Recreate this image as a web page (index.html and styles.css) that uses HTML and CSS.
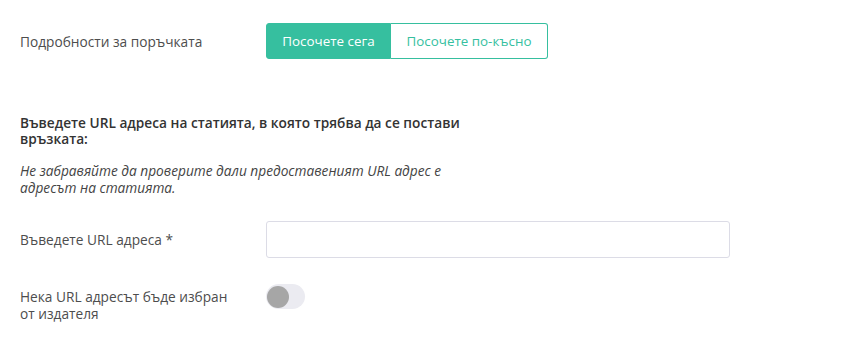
FILE: index.html
```html
<!DOCTYPE html>
<html lang="bg">
<head>
<meta charset="utf-8">
<link rel="stylesheet" href="styles.css">
</head>
<body>
<div class="page">
  <div class="row row-top">
    <div class="label">Подробности за поръчката</div>
    <div class="btn-group">
      <button class="btn btn-active">Посочете сега</button>
      <button class="btn btn-later">Посочете по-късно</button>
    </div>
  </div>

  <div class="info">
    <p class="heading">Въведете URL адреса на статията, в която трябва да се постави връзката:</p>
    <p class="note">Не забравяйте да проверите дали предоставеният URL адрес е адресът на статията.</p>
  </div>

  <div class="row row-input">
    <div class="label">Въведете URL адреса *</div>
    <input class="text-input" type="text">
  </div>

  <div class="row row-toggle">
    <div class="label label-wrap">Нека URL адресът бъде избран от издателя</div>
    <div class="toggle"><span class="knob"></span></div>
  </div>
</div>
</body>
</html>
```

FILE: styles.css
```css
html, body {
  margin: 0;
  padding: 0;
  background: #ffffff;
}
body {
  font-family: "Open Sans", "Noto Sans", sans-serif;
  font-size: 13.7px;
  color: #444444;
}
.page {
  padding: 23px 20px 0 20px;
}
.row {
  display: flex;
  align-items: center;
}
.label {
  width: 246px;
  flex: none;
  color: #4d4d4d;
  line-height: 17px;
}
.btn-group {
  display: flex;
  height: 36px;
}
.btn {
  font-family: inherit;
  font-size: 13.4px;
  margin: 0;
  padding: 0;
  height: 36px;
  background: #ffffff;
  color: #36bf9f;
  border: 1px solid #36bf9f;
  cursor: pointer;
}
.btn-active {
  width: 125px;
  background: #36bf9f;
  color: #ffffff;
  border-radius: 3px 0 0 3px;
}
.btn-later {
  width: 157px;
  border-left: none;
  border-radius: 0 3px 3px 0;
}
.info {
  margin-top: 56px;
  width: 465px;
}
.heading {
  margin: 0;
  font-weight: 600;
  color: #333333;
  line-height: 16px;
}
.note {
  margin: 15px 0 0 0;
  font-style: italic;
  color: #444444;
  line-height: 17px;
}
.row-input {
  margin-top: 25px;
}
.text-input {
  box-sizing: border-box;
  width: 464px;
  height: 37px;
  border: 1px solid #dcdce6;
  border-radius: 3px;
  background: #ffffff;
  margin: 0;
  padding: 0 10px;
  font-family: inherit;
  font-size: 13px;
}
.row-toggle {
  margin-top: 26px;
  align-items: flex-start;
}
.row-toggle .label-wrap {
  width: 215px;
  padding-top: 4px;
  margin-right: 31px;
}
.toggle {
  position: relative;
  width: 39px;
  height: 25px;
  border-radius: 12.5px;
  background: #ebebf1;
}
.knob {
  position: absolute;
  left: 1px;
  top: 1.5px;
  width: 22px;
  height: 22px;
  border-radius: 50%;
  background: #a6a6a6;
}
```
